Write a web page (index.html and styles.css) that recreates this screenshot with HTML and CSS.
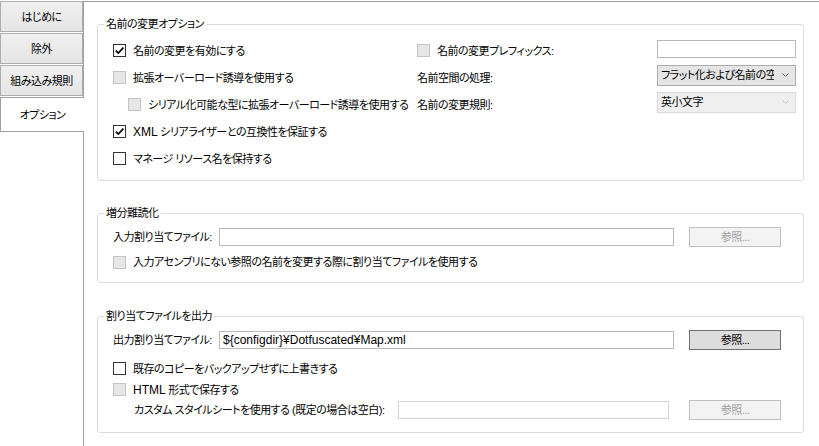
FILE: index.html
```html
<!DOCTYPE html>
<html lang="ja">
<head>
    <meta charset="UTF-8">
    <meta name="viewport" content="width=device-width, initial-scale=1.0">
    <title>オプション</title>
    <link rel="stylesheet" href="styles.css">
</head>
<body>
    <div class="window">
        <nav class="tabs">
            <div class="tab">はじめに</div>
            <div class="tab">除外</div>
            <div class="tab">組み込み規則</div>
            <div class="tab active">オプション</div>
        </nav>

        <main class="panel">
            <fieldset class="group group-rename">
                <legend>名前の変更オプション</legend>
                <div class="rename-grid">
                    <div class="col-left">
                        <div class="row">
                            <span class="cb checked"><svg viewBox="0 0 11 11"><path d="M1.8 5.6 L4.3 8.1 L9.4 2.6"/></svg></span>
                            <span>名前の変更を有効にする</span>
                        </div>
                        <div class="row">
                            <span class="cb disabled"></span>
                            <span>拡張オーバーロード誘導を使用する</span>
                        </div>
                        <div class="row indent">
                            <span class="cb disabled"></span>
                            <span>シリアル化可能な型に拡張オーバーロード誘導を使用する</span>
                        </div>
                        <div class="row">
                            <span class="cb checked"><svg viewBox="0 0 11 11"><path d="M1.8 5.6 L4.3 8.1 L9.4 2.6"/></svg></span>
                            <span><span class="latin">XML</span> シリアライザーとの互換性を保証する</span>
                        </div>
                        <div class="row">
                            <span class="cb"></span>
                            <span>マネージ リソース名を保持する</span>
                        </div>
                    </div>
                    <div class="col-right">
                        <div class="row">
                            <div class="field-label">
                                <span class="cb disabled"></span>
                                <span>名前の変更プレフィックス:</span>
                            </div>
                            <div class="textbox prefix-box"></div>
                        </div>
                        <div class="row">
                            <div class="field-label">名前空間の処理:</div>
                            <div class="combo">
                                <span class="combo-text">フラット化および名前の空間を保持</span>
                                <svg class="chevron" viewBox="0 0 7 4"><path d="M0.5 0.5 L3.5 3.5 L6.5 0.5"/></svg>
                            </div>
                        </div>
                        <div class="row">
                            <div class="field-label">名前の変更規則:</div>
                            <div class="combo disabled">
                                <span class="combo-text">英小文字</span>
                                <svg class="chevron" viewBox="0 0 7 4"><path d="M0.5 0.5 L3.5 3.5 L6.5 0.5"/></svg>
                            </div>
                        </div>
                    </div>
                </div>
            </fieldset>

            <fieldset class="group group-incremental">
                <legend>増分難読化</legend>
                <div class="file-row">
                    <span class="file-label">入力割り当てファイル:</span>
                    <div class="textbox file-box"></div>
                    <div class="button disabled">参照...</div>
                </div>
                <div class="row check-row">
                    <span class="cb disabled"></span>
                    <span>入力アセンブリにない参照の名前を変更する際に割り当てファイルを使用する</span>
                </div>
            </fieldset>

            <fieldset class="group group-output">
                <legend>割り当てファイルを出力</legend>
                <div class="file-row">
                    <span class="file-label">出力割り当てファイル:</span>
                    <div class="textbox file-box latin">${configdir}¥Dotfuscated¥Map.xml</div>
                    <div class="button default">参照...</div>
                </div>
                <div class="row small-row first">
                    <span class="cb"></span>
                    <span>既存のコピーをバックアップせずに上書きする</span>
                </div>
                <div class="row small-row">
                    <span class="cb disabled"></span>
                    <span><span class="latin">HTML</span> 形式で保存する</span>
                </div>
                <div class="file-row style-row">
                    <span class="style-label">カスタム スタイルシートを使用する (既定の場合は空白):</span>
                    <div class="textbox style-box disabled"></div>
                    <div class="button disabled">参照...</div>
                </div>
            </fieldset>
        </main>
    </div>
</body>
</html>
```

FILE: styles.css
```css
body {
    margin: 0;
    background-color: #fff;
    color: #000;
    font-family: "Liberation Sans", "Noto Sans CJK JP", sans-serif;
    font-size: 11px;
    letter-spacing: -0.5px;
    line-height: 16px;
    font-feature-settings: "palt";
}
.latin {
    font-size: 12px;
    letter-spacing: 0;
}
.window {
    display: flex;
    margin-top: 1px;
    height: 445px;
}
.tabs {
    width: 83px;
    flex-shrink: 0;
    display: flex;
    flex-direction: column;
    gap: 1px;
}
.tab {
    width: 83px;
    height: 31px;
    box-sizing: border-box;
    border: 1px solid #acacac;
    background: linear-gradient(#f0f0f0, #e5e5e5);
    display: flex;
    align-items: center;
    justify-content: center;
    white-space: nowrap;
}
.tab.active {
    position: relative;
    z-index: 1;
    width: 84px;
    height: 35px;
    margin-right: -1px;
    border-color: #a0a0a0;
    border-right: none;
    background: #fff;
}
.panel {
    flex: 1;
    border-left: 1px solid #a0a0a0;
    border-top: 1px solid #a0a0a0;
    padding-top: 14px;
}
.group {
    margin: 0 15px 0 13px;
    border: 1px solid #dcdcdc;
    border-radius: 3px;
    padding: 0 22px 7px 15px;
    min-width: 0;
}
.group legend {
    padding: 0 2px;
    margin-left: -9px;
    line-height: 16px;
}
.group-rename {
    padding: 5px 7px 8px 15px;
}
.group-incremental {
    margin-top: 24px;
    padding-top: 6px;
    padding-bottom: 7px;
}
.group-output {
    margin-top: 25px;
    padding-top: 6px;
    padding-bottom: 12px;
}
.rename-grid {
    display: flex;
}
.col-left {
    width: 304px;
    flex-shrink: 0;
}
.col-right {
    flex: 1;
}
.row {
    display: flex;
    align-items: center;
    height: 27px;
    white-space: nowrap;
}
.row.indent {
    padding-left: 15px;
}
.field-label {
    width: 240px;
    display: flex;
    align-items: center;
}
.cb {
    width: 13px;
    height: 13px;
    box-sizing: border-box;
    border: 1px solid #333;
    background: #fff;
    margin-right: 7px;
    flex-shrink: 0;
    display: flex;
}
.cb svg {
    width: 11px;
    height: 11px;
    fill: none;
    stroke: #000;
    stroke-width: 1.7;
}
.cb.disabled {
    border-color: #c4c4c4;
    background: #e6e6e6;
}
.textbox {
    box-sizing: border-box;
    border: 1px solid #b9b9b9;
    background: #fff;
    padding: 0 3px;
    display: flex;
    align-items: center;
    white-space: nowrap;
    overflow: hidden;
}
.textbox.disabled {
    border-color: #d4d4d4;
}
.prefix-box {
    width: 139px;
    height: 18px;
    margin-top: -4px;
}
.combo {
    width: 139px;
    height: 21px;
    box-sizing: border-box;
    border: 1px solid #acacac;
    background: #e5e5e5;
    display: flex;
    align-items: center;
    padding: 0 6px 0 3px;
    margin-top: -5px;
}
.combo-text {
    flex: 1;
    overflow: hidden;
    white-space: nowrap;
    margin-right: 8px;
}
.chevron {
    width: 7px;
    height: 4px;
    fill: none;
    stroke: #606060;
    stroke-width: 1;
}
.combo.disabled {
    border-color: #d9d9d9;
    background: #efefef;
}
.combo.disabled .chevron {
    stroke: #c0c0c0;
}
.file-row {
    display: flex;
    align-items: center;
    height: 20px;
}
.file-label {
    width: 106px;
    flex-shrink: 0;
    white-space: nowrap;
}
.file-box {
    flex: 1;
    height: 18px;
}
.button {
    width: 92px;
    height: 20px;
    box-sizing: border-box;
    margin-left: 15px;
    display: flex;
    align-items: center;
    justify-content: center;
    flex-shrink: 0;
}
.button.disabled {
    border: 1px solid #bfbfbf;
    background: #f3f3f3;
    color: #a0a0a0;
}
.button.default {
    border: 1px solid #707070;
    background: #dddddd;
}
.check-row {
    height: 26px;
    margin-top: 2px;
}
.small-row {
    height: 21px;
}
.small-row.first {
    margin-top: 8px;
}
.style-row {
    padding-left: 21px;
}
.style-label {
    width: 264px;
    flex-shrink: 0;
    white-space: nowrap;
}
.style-box {
    flex: 1;
    height: 18px;
    margin-right: 5px;
}
.style-row .button {
    margin-left: 15px;
}
```
